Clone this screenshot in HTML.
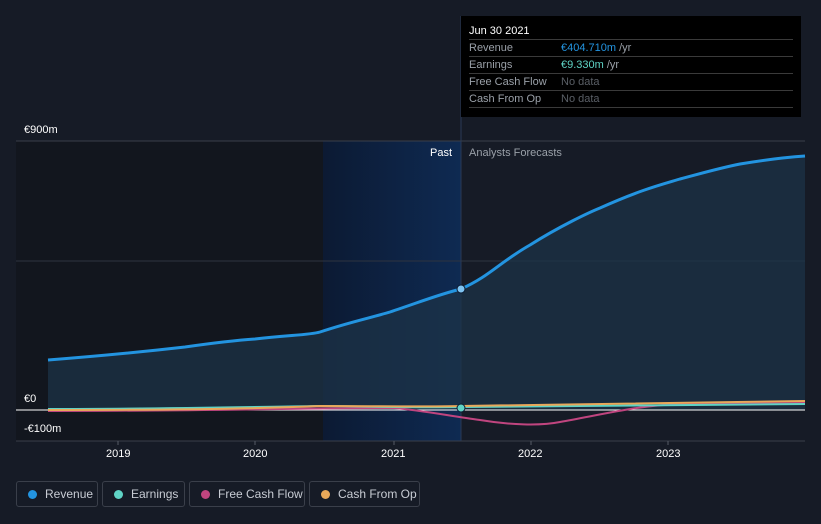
<!DOCTYPE html>
<html><head><meta charset="utf-8"><style>
body{margin:0;width:821px;height:524px;background:#161b26;font-family:"Liberation Sans",sans-serif;overflow:hidden;position:relative}
.t{position:absolute;color:#fff;font-size:11px}
.lg{position:absolute;top:481px;height:26px;border:1px solid #3a3f4a;border-radius:3px;box-sizing:border-box;color:#c8ccd4;font-size:12px;line-height:24px;padding-left:28px;white-space:nowrap}
.lg i{position:absolute;left:11px;top:8px;width:9px;height:9px;border-radius:50%}
#tt{position:absolute;left:461px;top:16px;width:340px;height:101px;background:#000}
#tt div{position:absolute;left:8px;width:324px;font-size:11px;color:#9aa0a8;border-bottom:1px solid #3a3a3a;height:16px;line-height:16px}
#tt span{position:absolute;left:92px}
</style></head><body>
<svg width="821" height="524" style="position:absolute;left:0;top:0">
<defs><linearGradient id="p" x1="0" x2="1"><stop offset="0" stop-color="#0c1a33"/><stop offset="1" stop-color="#0e2a52"/></linearGradient></defs>
<rect x="16" y="141" width="307" height="300" fill="#12161e"/>
<rect x="323" y="141" width="138" height="300" fill="url(#p)"/>
<line x1="16" y1="141" x2="805" y2="141" stroke="#3a3f4a"/>
<line x1="16" y1="261" x2="805" y2="261" stroke="#2e3440"/>
<line x1="16" y1="441" x2="805" y2="441" stroke="#3a3f4a"/>
<line x1="461" y1="16" x2="461" y2="441" stroke="#2a3a55"/>
<path d="M48,360 C100,356 150,351 185,347 C220,342 240,340 255,339 C290,335 310,335 320,332 C350,322 370,318 390,312 C420,302 440,294 461,289 C490,276 500,262 530,245 C560,226 590,212 600,208 C640,190 660,185 680,179 C710,171 720,168 740,164 C770,159 790,157 805,156 L805,410 L48,410Z" fill="#1c3347" opacity="0.75"/>
<path d="M48,360 C100,356 150,351 185,347 C220,342 240,340 255,339 C290,335 310,335 320,332 C350,322 370,318 390,312 C420,302 440,294 461,289 C490,276 500,262 530,245 C560,226 590,212 600,208 C640,190 660,185 680,179 C710,171 720,168 740,164 C770,159 790,157 805,156" fill="none" stroke="#2394e0" stroke-width="3"/>
<line x1="16" y1="410" x2="805" y2="410" stroke="#fff" stroke-width="1"/>
<path d="M48,411 C200,411 300,408 394,408 C420,410 450,416 480,420 C510,425 540,426 560,422 C600,415 640,405 680,404 L805,403" fill="none" stroke="#c0457f" stroke-width="2"/>
<path d="M48,409 C150,409 250,407 320,406 C360,406 400,408 461,407 C550,406 650,405 805,404" fill="none" stroke="#5fd3c5" stroke-width="2"/>
<path d="M48,410 C150,410 250,409 320,406 C380,406 420,407 461,406 C550,404 650,404 805,401" fill="none" stroke="#e8a85a" stroke-width="2"/>
<circle cx="461" cy="289" r="4" fill="#7fc3f0" stroke="#0b1a30"/>
<circle cx="461" cy="408" r="4" fill="#5fd3c5" stroke="#0b1a30"/>
<g stroke="#555b66"><line x1="118" y1="441" x2="118" y2="445"/><line x1="255" y1="441" x2="255" y2="445"/><line x1="394" y1="441" x2="394" y2="445"/><line x1="531" y1="441" x2="531" y2="445"/><line x1="668" y1="441" x2="668" y2="445"/></g>
</svg>
<div class="t" style="left:24px;top:124px">€900m</div>
<div class="t" style="left:24px;top:393px">€0</div>
<div class="t" style="left:24px;top:423px">-€100m</div>
<div class="t" style="left:430px;top:147px">Past</div>
<div class="t" style="left:469px;top:147px;color:#9aa0a8">Analysts Forecasts</div>
<div class="t" style="left:106px;top:448px">2019</div>
<div class="t" style="left:243px;top:448px">2020</div>
<div class="t" style="left:381px;top:448px">2021</div>
<div class="t" style="left:518px;top:448px">2022</div>
<div class="t" style="left:656px;top:448px">2023</div>
<div id="tt">
<div style="top:7px;color:#fff;font-size:11px">Jun 30 2021</div>
<div style="top:24px">Revenue<span><b style="color:#2394e0;font-weight:normal">€404.710m</b> /yr</span></div>
<div style="top:41px">Earnings<span><b style="color:#5fd3c5;font-weight:normal">€9.330m</b> /yr</span></div>
<div style="top:58px">Free Cash Flow<span style="color:#5a5f66">No data</span></div>
<div style="top:75px">Cash From Op<span style="color:#5a5f66">No data</span></div>
</div>
<div class="lg" style="left:16px;width:82px"><i style="background:#2394e0"></i>Revenue</div>
<div class="lg" style="left:102px;width:83px"><i style="background:#5fd3c5"></i>Earnings</div>
<div class="lg" style="left:189px;width:116px"><i style="background:#c0457f"></i>Free Cash Flow</div>
<div class="lg" style="left:309px;width:111px"><i style="background:#e8a85a"></i>Cash From Op</div>
</body></html>
